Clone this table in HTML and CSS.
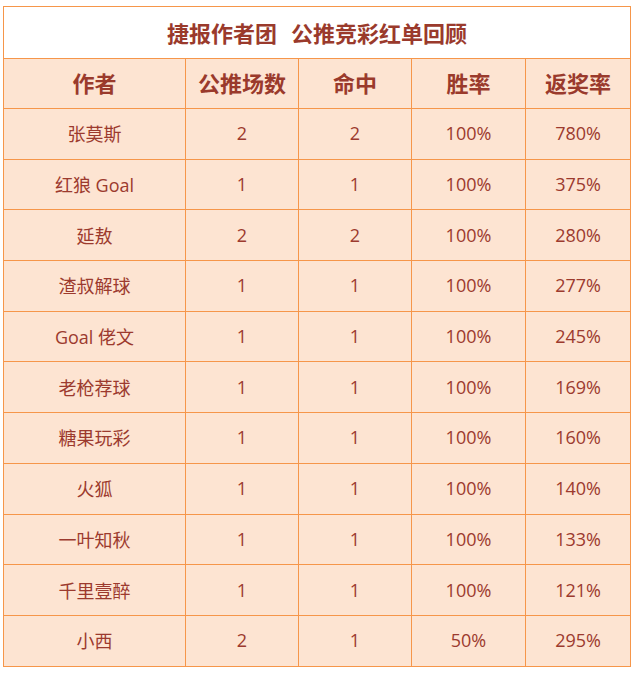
FILE: index.html
```html
<!DOCTYPE html>
<html lang="zh-CN">
<head>
<meta charset="utf-8">
<title>捷报作者团 公推竞彩红单回顾</title>
<link rel="stylesheet" href="styles.css">
</head>
<body>
<div class="wrap">
<table class="report">
  <colgroup>
    <col class="c1"><col class="c2"><col class="c3"><col class="c4"><col class="c5">
  </colgroup>
  <thead>
    <tr class="title-row"><th colspan="5">捷报作者团<span class="gap"></span>公推竞彩红单回顾</th></tr>
    <tr class="head-row"><th>作者</th><th>公推场数</th><th>命中</th><th>胜率</th><th>返奖率</th></tr>
  </thead>
  <tbody>
    <tr><td>张莫斯</td><td>2</td><td>2</td><td>100%</td><td>780%</td></tr>
    <tr><td>红狼 Goal</td><td>1</td><td>1</td><td>100%</td><td>375%</td></tr>
    <tr><td>延敖</td><td>2</td><td>2</td><td>100%</td><td>280%</td></tr>
    <tr><td>渣叔解球</td><td>1</td><td>1</td><td>100%</td><td>277%</td></tr>
    <tr><td>Goal 佬文</td><td>1</td><td>1</td><td>100%</td><td>245%</td></tr>
    <tr><td>老枪荐球</td><td>1</td><td>1</td><td>100%</td><td>169%</td></tr>
    <tr><td>糖果玩彩</td><td>1</td><td>1</td><td>100%</td><td>160%</td></tr>
    <tr><td>火狐</td><td>1</td><td>1</td><td>100%</td><td>140%</td></tr>
    <tr><td>一叶知秋</td><td>1</td><td>1</td><td>100%</td><td>133%</td></tr>
    <tr><td>千里壹醉</td><td>1</td><td>1</td><td>100%</td><td>121%</td></tr>
    <tr><td>小西</td><td>2</td><td>1</td><td>50%</td><td>295%</td></tr>
  </tbody>
</table>
</div>
</body>
</html>
```
FILE: styles.css
```css
html, body {
  margin: 0;
  padding: 0;
  background: #ffffff;
}
.wrap {
  padding: 6px 0 0 3px;
}
.report {
  border-collapse: collapse;
  table-layout: fixed;
  width: 627px;
  font-family: "Open Sans", "Noto Sans CJK SC", sans-serif;
  color: #9c3a2e;
}
.c1 { width: 182px; }
.c2 { width: 113px; }
.c3 { width: 113px; }
.c4 { width: 114px; }
.c5 { width: 105px; }
.report th,
.report td {
  border: 1px solid #f6964a;
  text-align: center;
  vertical-align: middle;
  padding: 0;
}
.title-row th {
  background: #ffffff;
  height: 49px;
  padding-bottom: 2px;
  font-family: "Noto Sans CJK SC", sans-serif;
  font-size: 22px;
  font-weight: 700;
  color: #9a3a2c;
}
.gap {
  display: inline-block;
  width: 14px;
}
.head-row th {
  background: #fde4d2;
  height: 46px;
  padding-bottom: 3px;
  font-family: "Noto Sans CJK SC", sans-serif;
  font-size: 22px;
  font-weight: 700;
  color: #9a3a2c;
}
.report td {
  background: #fde4d2;
  height: 48.7px;
  padding-bottom: 1px;
  font-size: 18px;
}
```
